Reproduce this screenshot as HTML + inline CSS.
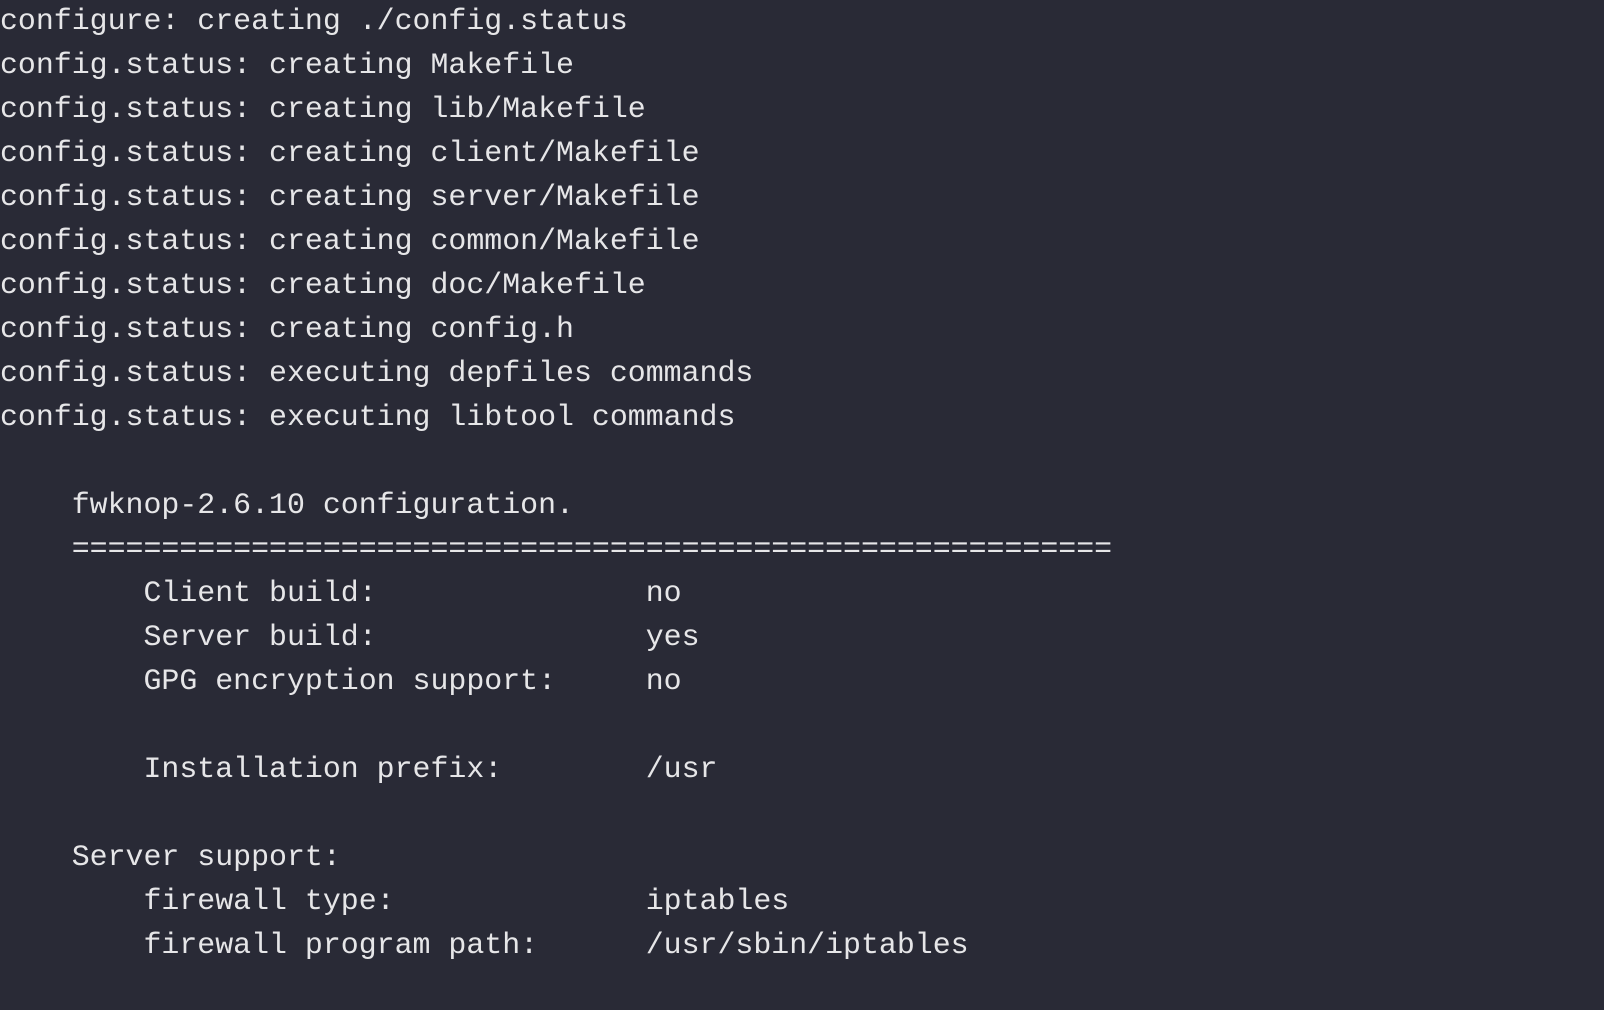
<!DOCTYPE html>
<html><head><meta charset="utf-8"><style>
html,body{margin:0;padding:0;background:#292a36;width:1604px;height:1010px;overflow:hidden}
pre{margin:0;position:relative;top:-1px;font-family:"Liberation Mono","DejaVu Sans Mono",monospace;font-size:29.9px;line-height:44px;color:#e6e6e8}
</style></head><body><pre>configure: creating ./config.status
config.status: creating Makefile
config.status: creating lib/Makefile
config.status: creating client/Makefile
config.status: creating server/Makefile
config.status: creating common/Makefile
config.status: creating doc/Makefile
config.status: creating config.h
config.status: executing depfiles commands
config.status: executing libtool commands

    fwknop-2.6.10 configuration.
    ==========================================================
        Client build:               no
        Server build:               yes
        GPG encryption support:     no

        Installation prefix:        /usr

    Server support:
        firewall type:              iptables
        firewall program path:      /usr/sbin/iptables
</pre></body></html>
